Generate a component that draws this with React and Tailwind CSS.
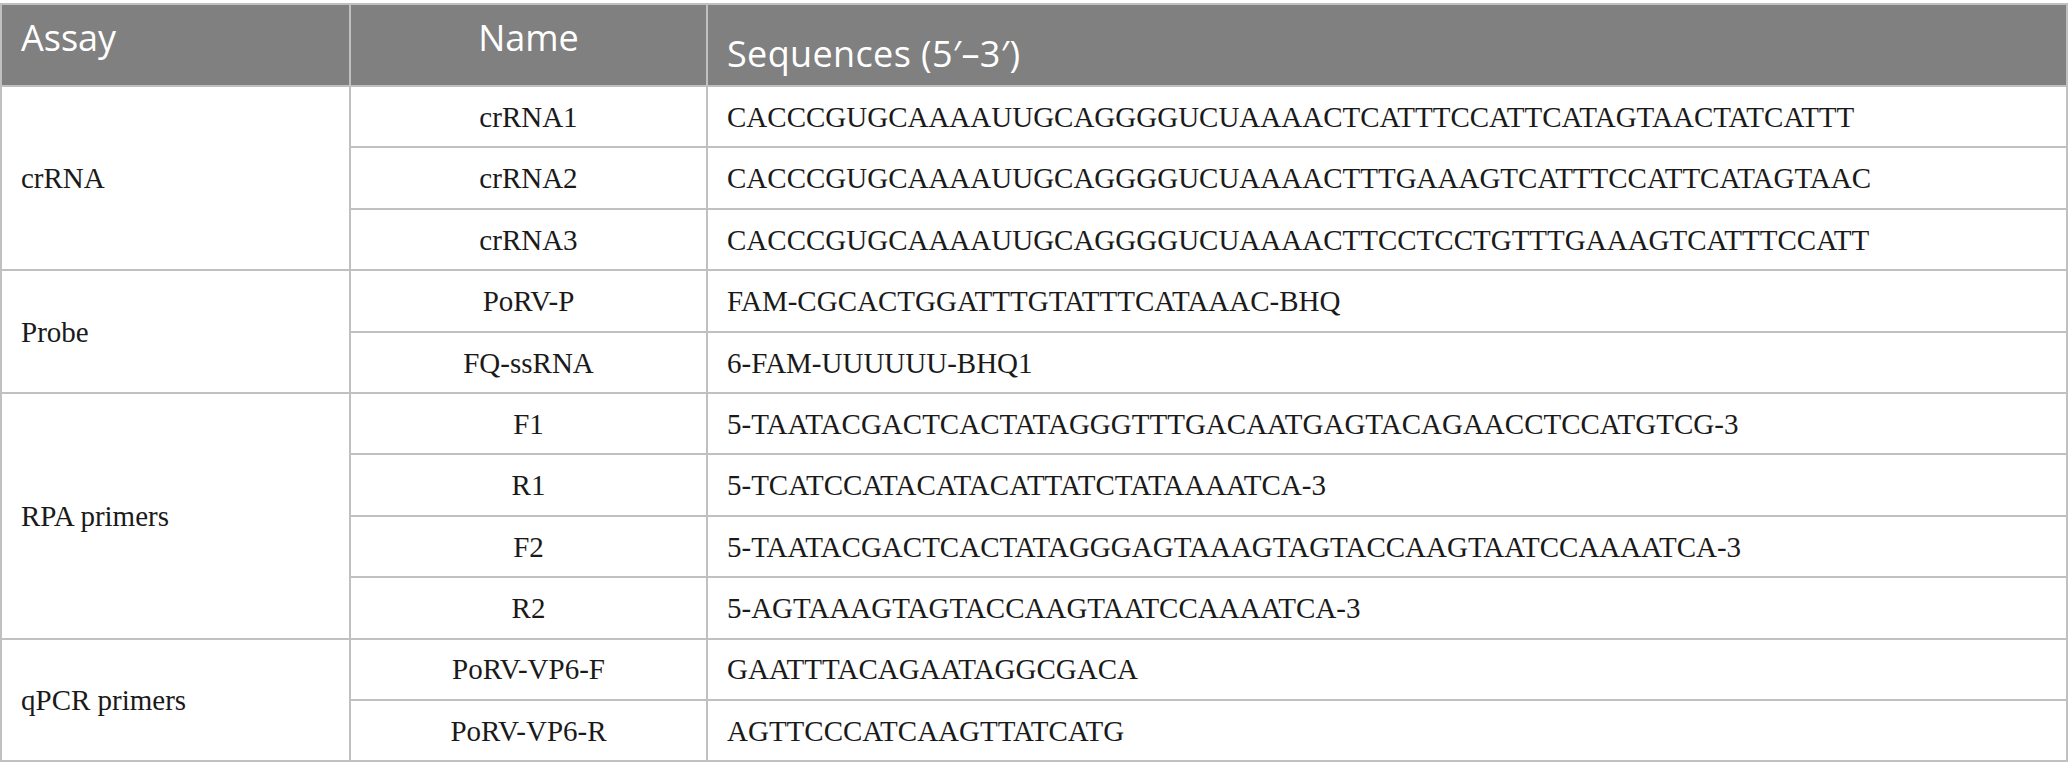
const groups = [
  {
    assay: "crRNA",
    rows: [
      ["crRNA1", "CACCCGUGCAAAAUUGCAGGGGUCUAAAACTCATTTCCATTCATAGTAACTATCATTT"],
      ["crRNA2", "CACCCGUGCAAAAUUGCAGGGGUCUAAAACTTTGAAAGTCATTTCCATTCATAGTAAC"],
      ["crRNA3", "CACCCGUGCAAAAUUGCAGGGGUCUAAAACTTCCTCCTGTTTGAAAGTCATTTCCATT"],
    ],
  },
  {
    assay: "Probe",
    rows: [
      ["PoRV-P", "FAM-CGCACTGGATTTGTATTTCATAAAC-BHQ"],
      ["FQ-ssRNA", "6-FAM-UUUUUU-BHQ1"],
    ],
  },
  {
    assay: "RPA primers",
    rows: [
      ["F1", "5-TAATACGACTCACTATAGGGTTTGACAATGAGTACAGAACCTCCATGTCG-3"],
      ["R1", "5-TCATCCATACATACATTATCTATAAAATCA-3"],
      ["F2", "5-TAATACGACTCACTATAGGGAGTAAAGTAGTACCAAGTAATCCAAAATCA-3"],
      ["R2", "5-AGTAAAGTAGTACCAAGTAATCCAAAATCA-3"],
    ],
  },
  {
    assay: "qPCR primers",
    rows: [
      ["PoRV-VP6-F", "GAATTTACAGAATAGGCGACA"],
      ["PoRV-VP6-R", "AGTTCCCATCAAGTTATCATG"],
    ],
  },
];

export default function App() {
  return (
    <div className="w-[2068px] h-[779px] bg-white pt-[3px]">
      <table className="w-full table-fixed border-collapse text-[29px] text-[#1a1a1a] font-['Liberation_Serif',serif]">
        <colgroup>
          <col className="w-[349px]" />
          <col className="w-[357px]" />
          <col />
        </colgroup>
        <thead>
          <tr className="h-[82px] bg-[#808080] text-white font-['Open_Sans',sans-serif] text-[36px] leading-[48px]">
            <th className="border-2 border-[#c0c0c0] align-top text-left font-normal pl-[19px] pt-[9px]">Assay</th>
            <th className="border-2 border-[#c0c0c0] align-top text-center font-normal pt-[9px]">Name</th>
            <th className="border-2 border-[#c0c0c0] align-top text-left font-normal pl-[19px] pt-[25px] tracking-[0.01em]">Sequences (5′–3′)</th>
          </tr>
        </thead>
        <tbody>
          {groups.map((g) =>
            g.rows.map((r, i) => (
              <tr key={g.assay + r[0]} className="h-[61.4px]">
                {i === 0 && (
                  <td rowSpan={g.rows.length} className="border-2 border-[#c0c0c0] pl-[19px] pt-[2px] align-middle">
                    {g.assay}
                  </td>
                )}
                <td className="border-2 border-[#c0c0c0] text-center pt-[2px] align-middle">{r[0]}</td>
                <td className="border-2 border-[#c0c0c0] pl-[19px] pt-[2px] align-middle whitespace-nowrap">{r[1]}</td>
              </tr>
            ))
          )}
        </tbody>
      </table>
    </div>
  );
}
